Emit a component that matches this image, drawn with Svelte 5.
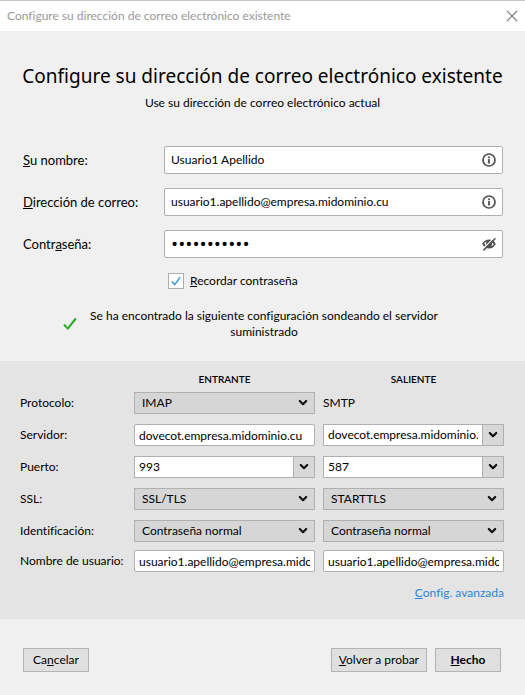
<script>
  let name = $state('Usuario1 Apellido');
  let email = $state('usuario1.apellido@empresa.midominio.cu');
  let password = $state('contrasenna');
  let remember = $state(true);
  let showPassword = $state(false);

  let incoming = $state({
    protocol: 'IMAP',
    server: 'dovecot.empresa.midominio.cu',
    port: '993',
    ssl: 'SSL/TLS',
    auth: 'Contraseña normal',
    user: 'usuario1.apellido@empresa.midominio.cu'
  });

  let outgoing = $state({
    server: 'dovecot.empresa.midominio.cu',
    port: '587',
    ssl: 'STARTTLS',
    auth: 'Contraseña normal',
    user: 'usuario1.apellido@empresa.midominio.cu'
  });

  const protocols = ['IMAP', 'POP3'];
  const sslOptions = ['Ninguna', 'STARTTLS', 'SSL/TLS'];
  const authOptions = ['Contraseña normal', 'Contraseña cifrada', 'Kerberos/GSSAPI', 'NTLM'];
</script>

{#snippet chevron()}
  <svg class="chevron" width="10" height="8" viewBox="0 0 10 8" aria-hidden="true">
    <path d="M1.8 2 L5 5.2 L8.2 2" fill="none" stroke="#111" stroke-width="2.2" stroke-linecap="round" stroke-linejoin="round" />
  </svg>
{/snippet}

{#snippet infoIcon()}
  <svg width="14" height="14" viewBox="0 0 14 14" aria-hidden="true">
    <circle cx="7" cy="7" r="6" fill="none" stroke="#4f4f4f" stroke-width="1.7" />
    <circle cx="7" cy="4.2" r="1" fill="#4f4f4f" />
    <path d="M7 6.6 V9.8" stroke="#4f4f4f" stroke-width="1.8" stroke-linecap="round" />
  </svg>
{/snippet}

{#snippet dropdown(target, key, options, label)}
  <div class="dropdown">
    <select aria-label={label} bind:value={target[key]}>
      {#each options as option}
        <option value={option}>{option}</option>
      {/each}
    </select>
    {@render chevron()}
  </div>
{/snippet}

{#snippet combo(target, key, label)}
  <div class="combo">
    <input type="text" aria-label={label} bind:value={target[key]} />
    <button type="button" aria-label="Mostrar opciones">{@render chevron()}</button>
  </div>
{/snippet}

<div class="dialog">
  <header class="titlebar">
    <span>Configure su dirección de correo electrónico existente</span>
    <button type="button" class="close" aria-label="Cerrar">
      <svg width="12" height="12" viewBox="0 0 12 12" aria-hidden="true">
        <path d="M1 1 L11 11 M11 1 L1 11" stroke="#777" stroke-width="1.1" />
      </svg>
    </button>
  </header>

  <section class="intro">
    <h1>Configure su dirección de correo electrónico existente</h1>
    <p>Use su dirección de correo electrónico actual</p>
  </section>

  <section class="account">
    <div class="field">
      <label for="name"><u>S</u>u nombre:</label>
      <div class="box">
        <input id="name" type="text" bind:value={name} />
        {@render infoIcon()}
      </div>
    </div>
    <div class="field">
      <label for="email"><u>D</u>irección de correo:</label>
      <div class="box">
        <input id="email" type="text" bind:value={email} />
        {@render infoIcon()}
      </div>
    </div>
    <div class="field">
      <label for="password">Contr<u>a</u>seña:</label>
      <div class="box">
        <input id="password" class:masked={!showPassword} type={showPassword ? 'text' : 'password'} bind:value={password} />
        <button type="button" class="eye" aria-label="Mostrar contraseña" onclick={() => (showPassword = !showPassword)}>
          <svg width="14" height="14" viewBox="0 0 14 14" aria-hidden="true">
            <path d="M0.2 7 C2 3.6 4.4 2.6 7 2.6 S12 3.6 13.8 7 C12 10.4 9.6 11.4 7 11.4 S2 10.4 0.2 7 Z" fill="#4f4f4f" />
            <path d="M2.3 6.8 C3 5.6 3.6 5 4.4 4.6 C3.9 6 4 7.6 4.7 8.9 C3.6 8.4 2.9 7.8 2.3 6.8 Z M11.7 7.2 C11.2 8.2 10.4 8.8 9.4 9.3 C10 8.2 10.2 7 9.9 5.8 C10.8 6 11.3 6.5 11.7 7.2 Z" fill="#fff" />
            <path d="M0.9 12 L12.1 0.9" stroke="#fff" stroke-width="1.2" />
            <path d="M1.9 12.9 L13 1.8" stroke="#4f4f4f" stroke-width="1.5" stroke-linecap="round" />
          </svg>
        </button>
      </div>
    </div>
    <div class="remember">
      <input id="remember" type="checkbox" bind:checked={remember} />
      <label for="remember"><u>R</u>ecordar contraseña</label>
    </div>
  </section>

  <div class="status">
    <svg width="14" height="14" viewBox="0 0 14 14" aria-hidden="true">
      <path d="M1.6 8.2 L4.8 11.6 L12.4 2" fill="none" stroke="#2fae27" stroke-width="2.1" stroke-linecap="round" stroke-linejoin="round" />
    </svg>
    <p>Se ha encontrado la siguiente configuración sondeando el servidor suministrado</p>
  </div>

  <section class="settings">
    <div class="row heads">
      <span></span>
      <h2>Entrante</h2>
      <h2>Saliente</h2>
    </div>
    <div class="row">
      <span>Protocolo:</span>
      {@render dropdown(incoming, 'protocol', protocols, 'Protocolo entrante')}
      <span>SMTP</span>
    </div>
    <div class="row">
      <label for="server">Servidor:</label>
      <input id="server" class="plain" type="text" bind:value={incoming.server} />
      {@render combo(outgoing, 'server', 'Servidor saliente')}
    </div>
    <div class="row">
      <span>Puerto:</span>
      {@render combo(incoming, 'port', 'Puerto entrante')}
      {@render combo(outgoing, 'port', 'Puerto saliente')}
    </div>
    <div class="row">
      <span>SSL:</span>
      {@render dropdown(incoming, 'ssl', sslOptions, 'SSL entrante')}
      {@render dropdown(outgoing, 'ssl', sslOptions, 'SSL saliente')}
    </div>
    <div class="row">
      <span>Identificación:</span>
      {@render dropdown(incoming, 'auth', authOptions, 'Identificación entrante')}
      {@render dropdown(outgoing, 'auth', authOptions, 'Identificación saliente')}
    </div>
    <div class="row user">
      <label for="user">Nombre de usuario:</label>
      <input id="user" class="plain" type="text" bind:value={incoming.user} />
      <input class="plain" type="text" aria-label="Nombre de usuario saliente" bind:value={outgoing.user} />
    </div>
    <a class="advanced" href="#avanzada"><u>C</u>onfig. avanzada</a>
  </section>

  <footer class="actions">
    <button type="button" class="btn">Ca<u>n</u>celar</button>
    <span class="spacer"></span>
    <button type="button" class="btn"><u>V</u>olver a probar</button>
    <button type="button" class="btn primary"><u>H</u>echo</button>
  </footer>
</div>

<style>
  :global(body) {
    background: #f0f0f0;
  }

  .dialog,
  .dialog input,
  .dialog select,
  .dialog button {
    font-family: Lato, "Open Sans", sans-serif;
    font-size: 12px;
    font-variant-ligatures: none;
    line-height: 16px;
    color: #000;
  }

  .dialog {
    min-height: 100vh;
    box-sizing: border-box;
    border-top: 1px solid #c6c6c6;
    background: #f0f0f0;
  }

  .dialog * {
    box-sizing: border-box;
  }

  h1,
  h2,
  p {
    margin: 0;
  }

  input,
  select,
  button {
    margin: 0;
    border-radius: 0;
    outline: none;
  }

  .titlebar {
    display: flex;
    align-items: center;
    justify-content: space-between;
    height: 30px;
    padding: 0 7px;
    background: #fff;
    color: #999;
  }

  .close,
  .eye {
    display: flex;
    padding: 0;
    border: 0;
    background: none;
  }

  .intro {
    padding: 31px 10px 0;
    text-align: center;
  }

  h1 {
    font-family: "Noto Sans", sans-serif;
    font-size: 19px;
    line-height: 28px;
    font-weight: 400;
    white-space: nowrap;
  }

  .intro p {
    margin-top: 5px;
  }

  .account {
    display: flex;
    flex-direction: column;
    gap: 14px;
    padding: 35px 22px 0 23px;
  }

  .field {
    display: grid;
    grid-template-columns: 141px 1fr;
    align-items: center;
  }

  .field label {
    font-size: 13px;
    white-space: nowrap;
  }

  .box {
    display: flex;
    align-items: center;
    height: 28px;
    padding: 0 6px;
    border: 1px solid #b0b0b0;
    border-radius: 2px;
    background: #fff;
  }

  .box input {
    flex: 1;
    min-width: 0;
    padding: 0;
    border: 0;
    background: none;
  }

  .box input.masked {
    font-family: "Open Sans", sans-serif;
    font-size: 19px;
  }

  .remember {
    display: flex;
    align-items: center;
    gap: 6px;
    padding: 1px 0 0 145px;
  }

  .remember input {
    appearance: none;
    width: 16px;
    height: 16px;
    border: 1px solid #adadad;
    background: #fff;
  }

  .remember input:checked {
    background: #fff url("data:image/svg+xml,%3Csvg xmlns='http://www.w3.org/2000/svg' viewBox='0 0 14 14'%3E%3Cpath d='M3.2 7.8 L5.8 10.6 L10.8 3.6' fill='none' stroke='%233b97e3' stroke-width='1.5' stroke-linecap='round'/%3E%3C/svg%3E") center / 14px 14px no-repeat;
  }

  .status {
    display: flex;
    align-items: center;
    gap: 4px;
    padding: 19px 78px 0 63px;
  }

  .status svg {
    flex: none;
  }

  .status p {
    flex: 1;
    text-align: center;
  }

  .settings {
    display: flex;
    flex-direction: column;
    margin-top: 21px;
    padding: 10px 21px 18px 20px;
    background: #e4e4e4;
  }

  .row {
    display: grid;
    grid-template-columns: 106px 1fr 1fr;
    column-gap: 8px;
    align-items: center;
    height: 22px;
    margin-top: 10px;
    white-space: nowrap;
  }

  .row.heads {
    height: 16px;
    margin-top: 0;
  }

  .row.heads + .row {
    margin-top: 5px;
  }

  .row.user {
    margin-top: 8px;
  }

  h2 {
    font-size: 10px;
    line-height: 16px;
    font-weight: 600;
    text-align: center;
    text-transform: uppercase;
  }

  .plain,
  .combo,
  .dropdown select {
    width: 100%;
    min-width: 0;
    height: 22px;
    border: 1px solid #b0b0b0;
    background: #fff;
  }

  .plain {
    padding: 0 4px;
    border-radius: 2px;
  }

  .combo {
    display: flex;
  }

  .combo input {
    flex: 1;
    min-width: 0;
    padding: 0 0 0 4px;
    border: 0;
    border-right: 4px solid #fff;
    background: #fff;
  }

  .combo button {
    display: flex;
    align-items: center;
    justify-content: center;
    width: 21px;
    padding: 0;
    border: 0;
    border-left: 1px solid #b0b0b0;
    background: #d8d8d8;
  }

  .dropdown {
    position: relative;
    min-width: 0;
  }

  .dropdown select {
    display: block;
    appearance: none;
    padding: 0 20px 0 7px;
    background: #d6d6d6;
  }

  .dropdown .chevron {
    position: absolute;
    top: 7px;
    right: 7px;
    pointer-events: none;
  }

  .dialog .advanced {
    align-self: flex-end;
    margin-top: 13px;
    color: #2a84d8;
    text-decoration: none;
  }

  .actions {
    display: flex;
    gap: 8px;
    padding: 29px 24px 22px 23px;
  }

  .spacer {
    flex: 1;
  }

  .btn {
    min-width: 66px;
    height: 24px;
    padding: 0 7px;
    border: 1px solid #b4b4b4;
    background: #e0e0e0;
    white-space: nowrap;
  }

  .primary {
    font-weight: 700;
  }
</style>
